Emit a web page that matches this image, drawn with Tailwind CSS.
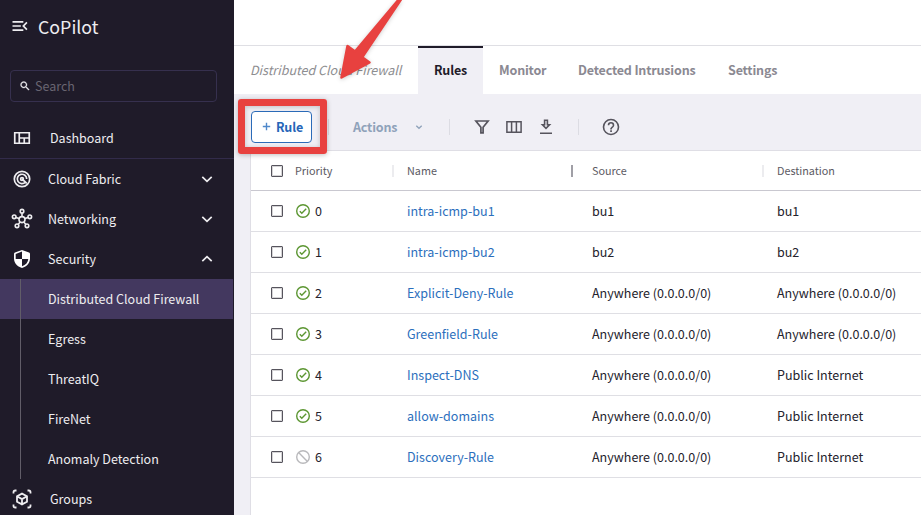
<!DOCTYPE html>
<html lang="en">
<head>
<meta charset="utf-8">
<title>CoPilot</title>
<script src="https://cdn.jsdelivr.net/npm/@tailwindcss/browser@4"></script>
</head>
<body class="w-[921px] h-[515px] overflow-hidden relative flex bg-white font-['Noto_Sans_CJK_SC','Noto_Sans',sans-serif] text-[12.53px] leading-5 text-[#24222c]">

<!-- Sidebar -->
<aside class="w-[234px] h-full shrink-0 bg-[#1f1b29] text-[#eeedf0] flex flex-col overflow-hidden">
  <div class="h-[53px] shrink-0 flex items-center pl-[9.5px]">
    <svg class="size-5 shrink-0 -mt-px" viewBox="0 0 24 24" fill="currentColor"><path d="M3 18h13v-2H3v2zM3 13h10v-2H3v2zm0-7v2h13V6H3zm18 9.59L17.42 12 21 8.41 19.59 7l-5 5 5 5L21 15.59z"/></svg>
    <span class="ml-[8.5px] -mt-px text-[17.8px] leading-6">CoPilot</span>
  </div>
  <div class="mt-[17px] ml-[10px] w-[207px] h-8 shrink-0 rounded border border-[#36304e] flex items-center pl-2">
    <svg class="size-3 shrink-0" viewBox="0 0 24 24" fill="currentColor" stroke="currentColor" stroke-width=".6"><path d="M15.5 14h-.79l-.28-.27C15.41 12.59 16 11.11 16 9.5 16 5.91 13.09 3 9.5 3S3 5.91 3 9.5 5.91 16 9.5 16c1.61 0 3.09-.59 4.23-1.57l.27.28v.79l5 4.99L20.49 19l-4.99-5zm-6 0C7.01 14 5 11.99 5 9.5S7.01 5 9.5 5 14 7.01 14 9.5 11.99 14 9.5 14z"/></svg>
    <span class="ml-1 text-[#696571]">Search</span>
  </div>
  <nav class="mt-4 flex flex-col">
    <div class="h-[41px] flex items-center pl-3 border-b border-[#322b4a]">
      <svg class="size-5" viewBox="0 0 20 20" fill="none" stroke="currentColor" stroke-width="1.7"><path d="M2.75 4.75h14.5v10.5H2.75zM7.25 4.75v10.5M7.25 10h10M12.25 10v5.25"/></svg>
      <span class="ml-[18px]">Dashboard</span>
    </div>
    <div class="h-10 flex items-center pl-3">
      <svg class="size-5" viewBox="0 0 20 20" fill="none" stroke="currentColor" stroke-width="1.7"><circle cx="10" cy="10" r="7.7"/><path d="M13.4 13.2A4.7 4.7 0 1 1 14.7 10M10 10l4.8 4.4"/><circle cx="10" cy="10" r="1.4"/></svg>
      <span class="ml-4">Cloud Fabric</span>
      <svg class="ml-auto mr-[21px] w-3 h-3" viewBox="0 0 12 12" fill="none" stroke="currentColor" stroke-width="1.7"><path d="M1.3 3.8L6 8.4l4.7-4.6"/></svg>
    </div>
    <div class="h-10 flex items-center pl-3">
      <svg class="size-5 overflow-visible" viewBox="0 0 20 20" fill="none" stroke="currentColor" stroke-width="1.6"><circle cx="10" cy="10.6" r="3"/><circle cx="10" cy="2.200" r="1.800"/><circle cx="2.200" cy="7.800" r="1.800"/><circle cx="17.800" cy="7.800" r="1.800"/><circle cx="5" cy="16.800" r="1.800"/><circle cx="15" cy="16.800" r="1.800"/><path d="M10 4v3.600M4 8.400l3.100 1.200M16 8.400l-3.100 1.200M6.100 15.400l2.100-2.500M13.900 15.400l-2.100-2.500"/></svg>
      <span class="ml-4">Networking</span>
      <svg class="ml-auto mr-[21px] w-3 h-3" viewBox="0 0 12 12" fill="none" stroke="currentColor" stroke-width="1.7"><path d="M1.3 3.8L6 8.4l4.7-4.6"/></svg>
    </div>
    <div class="h-10 flex items-center pl-3">
      <svg class="size-5" viewBox="0 0 20 20"><path d="M10 .9l7 2.7c.6.3 1 .8 1 1.4v4.6c0 4.400-2.900 7.900-8 9.400-5.100-1.500-8-5-8-9.400V5c0-.6.4-1.100 1-1.400z" fill="#fff"/><path d="M10 2.500L3.700 5v5H10zM10 10h6.300c-.3 3.300-2.500 6.100-6.300 7.300z" fill="#1f1b29"/></svg>
      <span class="ml-4">Security</span>
      <svg class="ml-auto mr-[21px] w-3 h-3" viewBox="0 0 12 12" fill="none" stroke="currentColor" stroke-width="1.700"><path d="M1.300 8.200L6 3.600l4.700 4.600"/></svg>
    </div>
    <div class="bg-[linear-gradient(#615d68,#615d68)] bg-no-repeat bg-[length:1px_100%] bg-[position:20px_0] flex flex-col">
      <div class="h-10 mr-px flex items-center pl-12 bg-[#43385f] bg-[linear-gradient(#615d68,#615d68)] bg-no-repeat bg-[length:1px_100%] bg-[position:20px_0]"><span class="whitespace-nowrap">Distributed Cloud Firewall</span></div>
      <div class="h-10 flex items-center pl-12"><span>Egress</span></div>
      <div class="h-10 flex items-center pl-12"><span>ThreatIQ</span></div>
      <div class="h-10 flex items-center pl-12"><span>FireNet</span></div>
      <div class="h-10 flex items-center pl-12"><span>Anomaly Detection</span></div>
    </div>
    <div class="h-10 flex items-center pl-3">
      <svg class="size-5" viewBox="0 0 20 20" fill="none" stroke="currentColor" stroke-width="1.800"><path d="M1.500 4.500V3.300c0-1 .8-1.800 1.800-1.800h1.200M15.500 1.500h1.200c1 0 1.800.8 1.800 1.800v1.200M18.500 15.500v1.200c0 1-.8 1.800-1.800 1.800h-1.200M4.500 18.500H3.300c-1 0-1.800-.8-1.800-1.800v-1.200"/><path d="M10 4.600l5 2.700v5.400l-5 2.700-5-2.700V7.300zM5 7.300l5 2.800 5-2.800M10 10.100v5.300"/></svg>
      <span class="ml-[18px]">Groups</span>
    </div>
  </nav>
</aside>

<!-- Content -->
<main class="flex-1 min-w-0 h-full flex flex-col bg-[#f0eff5]">
  <div class="h-[46px] shrink-0 bg-white border-b border-[#dfdfe4]"></div>
  <div class="h-12 shrink-0 bg-white flex text-[#8b8992] font-bold tracking-[-0.18px] whitespace-nowrap">
    <div class="w-[184px] pl-4 pt-[14px] italic font-normal tracking-normal text-[#8d8d90]"><span>Distributed Cloud Firewall</span></div>
    <div class="w-[65px] border-t-2 border-[#1f1b29] bg-[#f0eff5] text-[#1f1b29] pt-3 pl-4"><span>Rules</span></div>
    <div class="w-[79px] pt-[14px] pl-4"><span>Monitor</span></div>
    <div class="w-[150px] pt-[14px] pl-4"><span>Detected Intrusions</span></div>
    <div class="pt-[14px] pl-4"><span>Settings</span></div>
  </div>
  <div class="h-14 shrink-0 flex items-center pl-[17px] pt-[9px]">
    <div class="w-[61px] h-8 rounded border border-[#2b6bb8] bg-white text-[#2565b8] font-bold tracking-[-0.18px] flex items-center pl-[10px]">
      <svg class="size-[9px]" viewBox="0 0 9 9" fill="none" stroke="#4f88ca" stroke-width="1.400"><path d="M4.500 .8v7.400M.8 4.500h7.400"/></svg>
      <span class="ml-[5px]">Rule</span>
    </div>
    <div class="ml-4 w-px h-4 bg-[#dcdce3]"></div>
    <span class="ml-6 w-[46px] font-bold tracking-[-0.18px] text-[#8fa2ba]">Actions</span>
    <svg class="ml-4 size-2" viewBox="0 0 8 8" fill="none" stroke="#8fa2ba" stroke-width="1.300"><path d="M1.300 2.700L4 5.300l2.700-2.600"/></svg>
    <div class="ml-[26px] w-px h-4 bg-[#dcdce3]"></div>
    <svg class="ml-[24px] size-4" viewBox="0 0 16 16" fill="none" stroke="#56545d" stroke-width="1.700"><path d="M1.900 2h12.200L9.100 8.300v5.600H6.900V8.300z"/></svg>
    <svg class="ml-4 size-4" viewBox="0 0 16 16" fill="none" stroke="#56545d" stroke-width="1.500"><path d="M.9 2.800h14.200v10.400H.9zM5.600 2.800v10.400M10.400 2.800v10.400"/></svg>
    <svg class="ml-4 size-4" viewBox="0 0 16 16" fill="none" stroke="#56545d" stroke-width="1.600"><path d="M6.600 1.300h2.800v4.500h2.100L8 9.300 4.500 5.800h2.100zM2 14.200h12"/></svg>
    <div class="ml-6 w-px h-4 bg-[#dcdce3]"></div>
    <svg class="ml-[22px] size-5" viewBox="0 0 20 20" fill="#56545d"><path fill-rule="evenodd" d="M10 1.700a8.300 8.300 0 1 0 0 16.600 8.300 8.300 0 0 0 0-16.600zm0 1.600a6.700 6.700 0 1 1 0 13.400 6.700 6.700 0 0 1 0-13.400z"/><path d="M9.200 13.300h1.700V15H9.200zM10 5a3.300 3.300 0 0 0-3.300 3.300h1.600a1.700 1.700 0 1 1 3.400 0c0 1.700-2.500 1.500-2.500 4.200h1.600c0-1.900 2.500-2.100 2.500-4.200A3.300 3.300 0 0 0 10 5z"/></svg>
  </div>

  <section id="table" class="ml-4 flex-1 border-l border-t border-[#dfdee5] bg-white">
    <div class="h-10 flex items-center border-b border-[#c9c8d0] text-[10.8px] text-[#5c5a63]">
      <div class="ml-5 size-3 border border-[#56545d] rounded-[1px] shadow-[inset_0_0_0_1px_rgba(86,84,93,0.25)]"></div>
      <span class="ml-3 w-24 -mt-px">Priority</span>
      <div class="w-[2px] h-3 bg-[#ececef] ml-px"></div>
      <span class="ml-[13px] w-[164px] -mt-px">Name</span>
      <div class="w-[2px] h-3 bg-[#a09fa6]"></div>
      <span class="ml-[19px] w-[170px] -mt-px">Source</span>
      <div class="w-[2px] h-3 bg-[#ececef]"></div>
      <span class="ml-[13px] -mt-px">Destination</span>
    </div>
    <div id="rows"></div>
  </section>
</main>

<!-- Callout: frame and arrow over the Rule button -->
<div class="absolute left-[238px] top-[99px] w-[89px] h-[55px] rounded-[3px] border-[7px] border-[#e8413f] shadow-[0_1px_5px_rgba(0,0,0,0.25),inset_0_1px_5px_rgba(0,0,0,0.2)]"></div>
<svg class="absolute left-[234px] top-0 w-[200px] h-[90px] drop-shadow-[0_1px_2px_rgba(0,0,0,0.200)]" viewBox="234 0 200 90"><path d="M400 -2L355 51.500 347.500 46 341.500 77.500 369.500 62.500 362.200 57.200 402 -2z" fill="#e8413f" stroke="#e8413f" stroke-width="2.500" stroke-linejoin="round"/></svg>

<template id="row">
  <div class="h-[41px] flex items-center border-b border-[#dfdfe4]">
    <div class="ml-5 size-3 border border-[#56545d] rounded-[1px] shadow-[inset_0_0_0_1px_rgba(86,84,93,0.25)]"></div>
    <div class="ml-3 w-5 flex items-center"></div>
    <span class="w-[92px]"></span>
    <span class="w-[185px] text-[#2c6fbd]"></span>
    <span class="w-[185px]"></span>
    <span class="whitespace-nowrap"></span>
  </div>
</template>
<script>
const ok = '<svg class="size-4" viewBox="0 0 16 16" fill="none" stroke="#5c9632" stroke-width="1.400"><circle cx="8" cy="8" r="6.300"/><path d="M4.800 8.200l2 2 4.400-4.400"/></svg>';
const off = '<svg class="size-4" viewBox="0 0 16 16" fill="none" stroke="#b9b9bc" stroke-width="1.400"><circle cx="8" cy="8" r="6.300"/><path d="M3.600 3.600l8.800 8.800"/></svg>';
const any = 'Anywhere (0.0.0.0/0)', net = 'Public Internet';
[['intra-icmp-bu1','bu1','bu1'],['intra-icmp-bu2','bu2','bu2'],['Explicit-Deny-Rule',any,any],['Greenfield-Rule',any,any],['Inspect-DNS',any,net],['allow-domains',any,net],['Discovery-Rule',any,net]].forEach((r, i) => {
  const n = document.getElementById('row').content.cloneNode(true);
  n.querySelectorAll('div')[2].innerHTML = i === 6 ? off : ok;
  [String(i), ...r].forEach((t, k) => n.querySelectorAll('span')[k].textContent = t);
  document.getElementById('rows').append(n);
});
</script>
</body>
</html>
